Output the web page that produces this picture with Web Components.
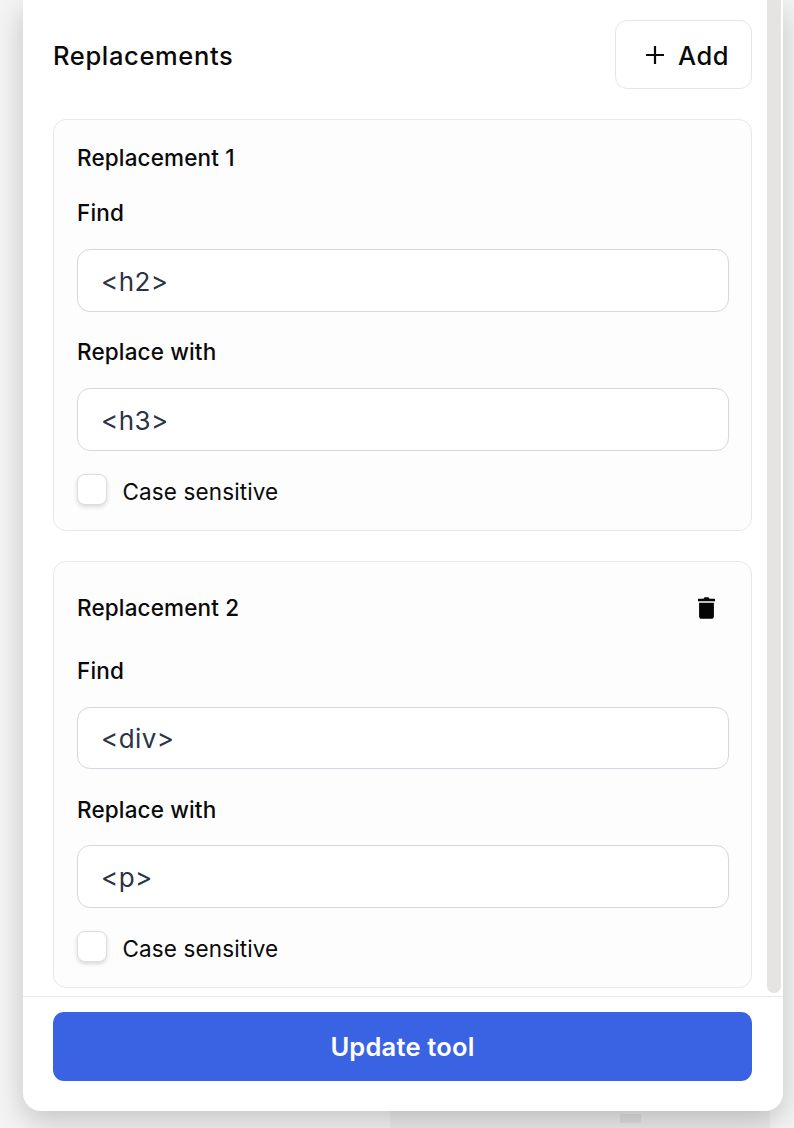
<!DOCTYPE html>
<html>
<head>
<meta charset="utf-8">
<title>Replacements</title>
<style>
  html, body { margin: 0; height: 1128px; overflow: hidden; background: #f4f4f4; }
  body { font-family: Inter, "Liberation Sans", sans-serif; color: #0a0a0a; }
</style>
</head>
<body>
<tool-dialog>
  <replacement-card title="Replacement 1" find="&lt;h2&gt;" replace="&lt;h3&gt;"></replacement-card>
  <replacement-card title="Replacement 2" find="&lt;div&gt;" replace="&lt;p&gt;" removable></replacement-card>
</tool-dialog>

<script>
class ToolDialog extends HTMLElement {
    constructor() {
        super();
        this.attachShadow({ mode: "open" });
    }

    connectedCallback() {
        this.shadowRoot.innerHTML = `
    <style>
      :host { display: block; position: relative; height: 1128px; overflow: hidden; }
      /* what shows through behind the overlay */
      .back { position: absolute; left: 390px; top: 1100px; width: 380px; height: 28px; background: rgba(0,0,0,.035); }
      .back i { position: absolute; left: 230px; top: 14px; width: 21px; height: 9px; background: rgba(0,0,0,.055); }
      .panel {
        position: relative;
        box-sizing: border-box;
        width: 760px;
        height: 1111px;
        margin-left: 23px;
        display: flex;
        flex-direction: column;
        background: #fff;
        border-radius: 0 0 18px 18px;
        box-shadow: 0 10px 30px rgba(0,0,0,.2);
      }
      .scroll { flex: 1; min-height: 0; box-sizing: border-box; padding: 20px 31px 0 30px; display: flex; flex-direction: column; gap: 30px; overflow: hidden; }
      .head { flex: none; display: flex; align-items: center; justify-content: space-between; }
      h2 { margin: 0; padding-top: 2px; font-size: 25.5px; font-weight: 450; letter-spacing: .65px; line-height: 32px; }
      .add {
        display: flex; align-items: center; gap: 12px;
        box-sizing: border-box; width: 137px; height: 69px; padding: 0 22px 0 28px;
        background: #fff; border: 1px solid #e6e6e6; border-radius: 12px;
        font: 450 25.5px Inter, "Liberation Sans", sans-serif; letter-spacing: .5px; color: #0a0a0a;
      }
      .add svg { flex: none; }
      .bar { position: absolute; right: 2px; top: 0; width: 14px; height: 993px; background: #e5e4e2; border-radius: 0 0 7px 7px; }
      .foot { flex: none; height: 115px; box-sizing: border-box; border-top: 1px solid #e8e8e8; padding: 15px 31px 0 30px; }
      .save {
        display: block; width: 100%; height: 69px; border: 0; border-radius: 11px;
        background: #3a63e3; color: #fff;
        font: 600 25.5px Inter, "Liberation Sans", sans-serif; letter-spacing: .2px;
      }
    </style>
    <div class="back"><i></i></div>
    <div class="panel">
      <div class="scroll">
        <div class="head">
          <h2>Replacements</h2>
          <button class="add">
            <svg width="22" height="22" viewBox="0 0 22 22" fill="none" stroke="#0a0a0a" stroke-width="2.2"><path d="M11 2v18M2 11h18"/></svg>
            <span style="padding-top:2px">Add</span>
          </button>
        </div>
        <slot></slot>
      </div>
      <div class="foot"><button class="save">Update tool</button></div>
      <div class="bar"></div>
    </div>
    `;
    }
}

class ReplacementCard extends HTMLElement {
    constructor() {
        super();
        this.attachShadow({ mode: "open" });
    }

    connectedCallback() {
        const removable = this.hasAttribute("removable");
        const trash = removable
            ? `<svg class="trash" width="19" height="24" viewBox="0 0 20 24" fill="#050505"><path d="M7 2.200C7 1 8 .6 10 .6s3 .4 3 1.600h5.200c.5 0 .8.4.8.9v1.200c0 .4-.3.7-.8.7H1.800c-.5 0-.8-.3-.8-.7V3.100c0-.5.3-.9.8-.9zM2.200 6.400h15.600v14.200c0 1.700-1 2.800-2.800 2.800H5c-1.800 0-2.800-1.100-2.800-2.800z"/></svg>`
            : "";
        this.shadowRoot.innerHTML = `
    <style>
      :host { flex: none; display: block; box-sizing: border-box; width: 699px; padding: 24px 22px 25px 23px; background: #fdfdfd; border: 1px solid #e8e8e8; border-radius: 13px; }
      * { font-family: Inter, "Liberation Sans", sans-serif; }
      .title { display: flex; align-items: center; justify-content: space-between; height: ${removable ? 44 : 28}px; margin-bottom: 27px; font-size: 22.5px; font-weight: 450; letter-spacing: .15px; }
      .title span { margin-top: -1px; }
      .trash { margin-right: 13px; }
      label { display: block; font-size: 22.5px; font-weight: 450; letter-spacing: .15px; line-height: 28px; }
      .box { display: flex; align-items: center; box-sizing: border-box; height: 62.500px; margin: 22px 0 26.500px; padding: 2px 23px 0; background: #fff; border: 1px solid #d5d7e0; border-radius: 13px; font-size: 26px; letter-spacing: .45px; color: #2b3446; }
      .box.last { height: 62.750px; margin: 21.750px 0 23px; }
      .check { display: flex; align-items: center; gap: 15.500px; font-size: 22.5px; letter-spacing: .12px; color: #0a0a0a; height: 31px; }
      .check span { padding-top: 4px; }
      .check i { flex: none; box-sizing: border-box; width: 30px; height: 31px; background: #fff; border: 1px solid #dcdde2; border-radius: 8px; box-shadow: 0 2px 4px rgba(0,0,0,.14); }
    </style>
    <div class="title"><span>${this.getAttribute("title")}</span>${trash}</div>
    <label>Find</label>
    <div class="box">${this.esc("find")}</div>
    <label>Replace with</label>
    <div class="box last">${this.esc("replace")}</div>
    <div class="check"><i></i><span>Case sensitive</span></div>
    `;
    }

    esc(name) {
        return this.getAttribute(name).replace(/</g, "&lt;").replace(/>/g, "&gt;");
    }
}

customElements.define("tool-dialog", ToolDialog);
customElements.define("replacement-card", ReplacementCard);
</script>
</body>
</html>
